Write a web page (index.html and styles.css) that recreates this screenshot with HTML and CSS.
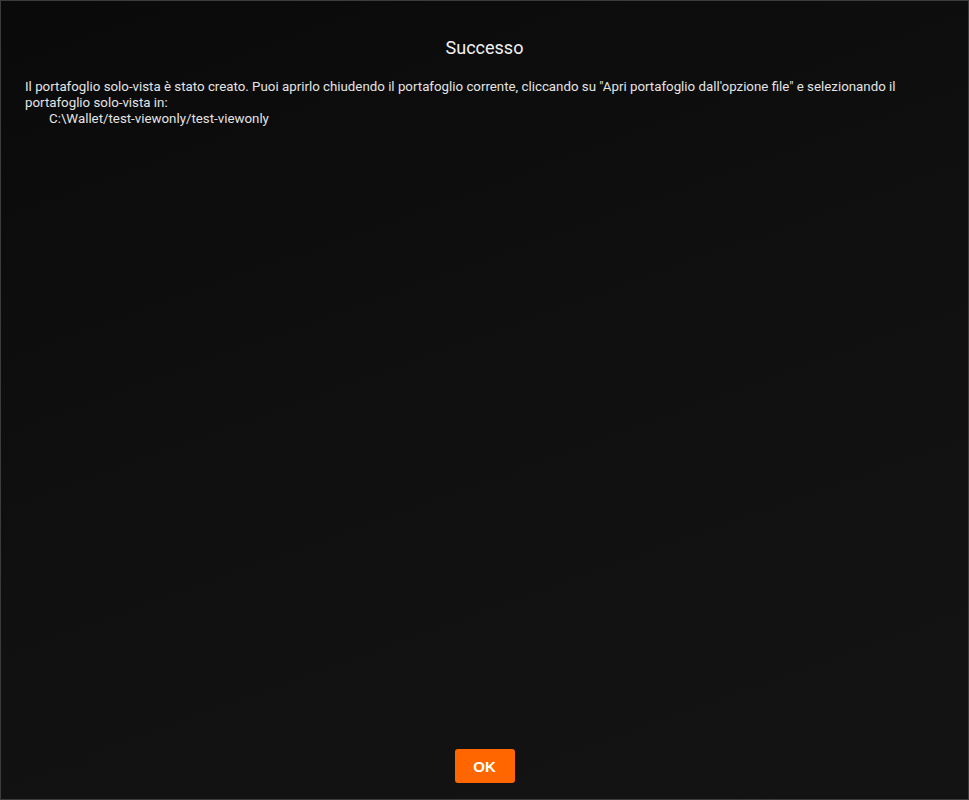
FILE: index.html
```html
<!DOCTYPE html>
<html>
<head>
<meta charset="utf-8">
<link rel="stylesheet" href="styles.css">
</head>
<body>
<div class="dialog">
  <h1 class="title">Successo</h1>
  <div class="message">
    <p>Il portafoglio solo-vista è stato creato. Puoi aprirlo chiudendo il portafoglio corrente, cliccando su "Apri portafoglio dall'opzione file" e selezionando il portafoglio solo-vista in:</p>
    <p class="path">C:\Wallet/test-viewonly/test-viewonly</p>
  </div>
  <div class="actions">
    <button class="ok">OK</button>
  </div>
</div>
</body>
</html>
```
FILE: styles.css
```css
html, body {
  margin: 0;
  padding: 0;
  height: 100%;
}
body {
  background: #0f0f0f;
  font-family: Roboto, "Liberation Sans", sans-serif;
}
.dialog {
  box-sizing: border-box;
  height: 800px;
  border: 1px solid #3c3c3c;
  background: linear-gradient(160deg, #0a0a0a 0%, #111111 60%, #131313 100%);
  display: flex;
  flex-direction: column;
  padding: 0 24px;
}
.title {
  margin: 36px 0 0;
  font-size: 18px;
  font-weight: 400;
  color: #f2f2f2;
  text-align: center;
  line-height: 22px;
}
.message {
  margin-top: 20px;
  color: #e4e4e4;
  font-size: 13.3px;
  line-height: 16px;
  flex: 1;
}
.message p {
  margin: 0;
}
.message .path {
  padding-left: 24px;
}
.actions {
  display: flex;
  justify-content: center;
  padding-bottom: 16px;
}
.ok {
  width: 60px;
  height: 34px;
  border: none;
  border-radius: 3px;
  background: #ff6600;
  color: #ffffff;
  font-family: "Liberation Sans", Arial, sans-serif;
  font-weight: 700;
  font-size: 15px;
  cursor: pointer;
}
```
